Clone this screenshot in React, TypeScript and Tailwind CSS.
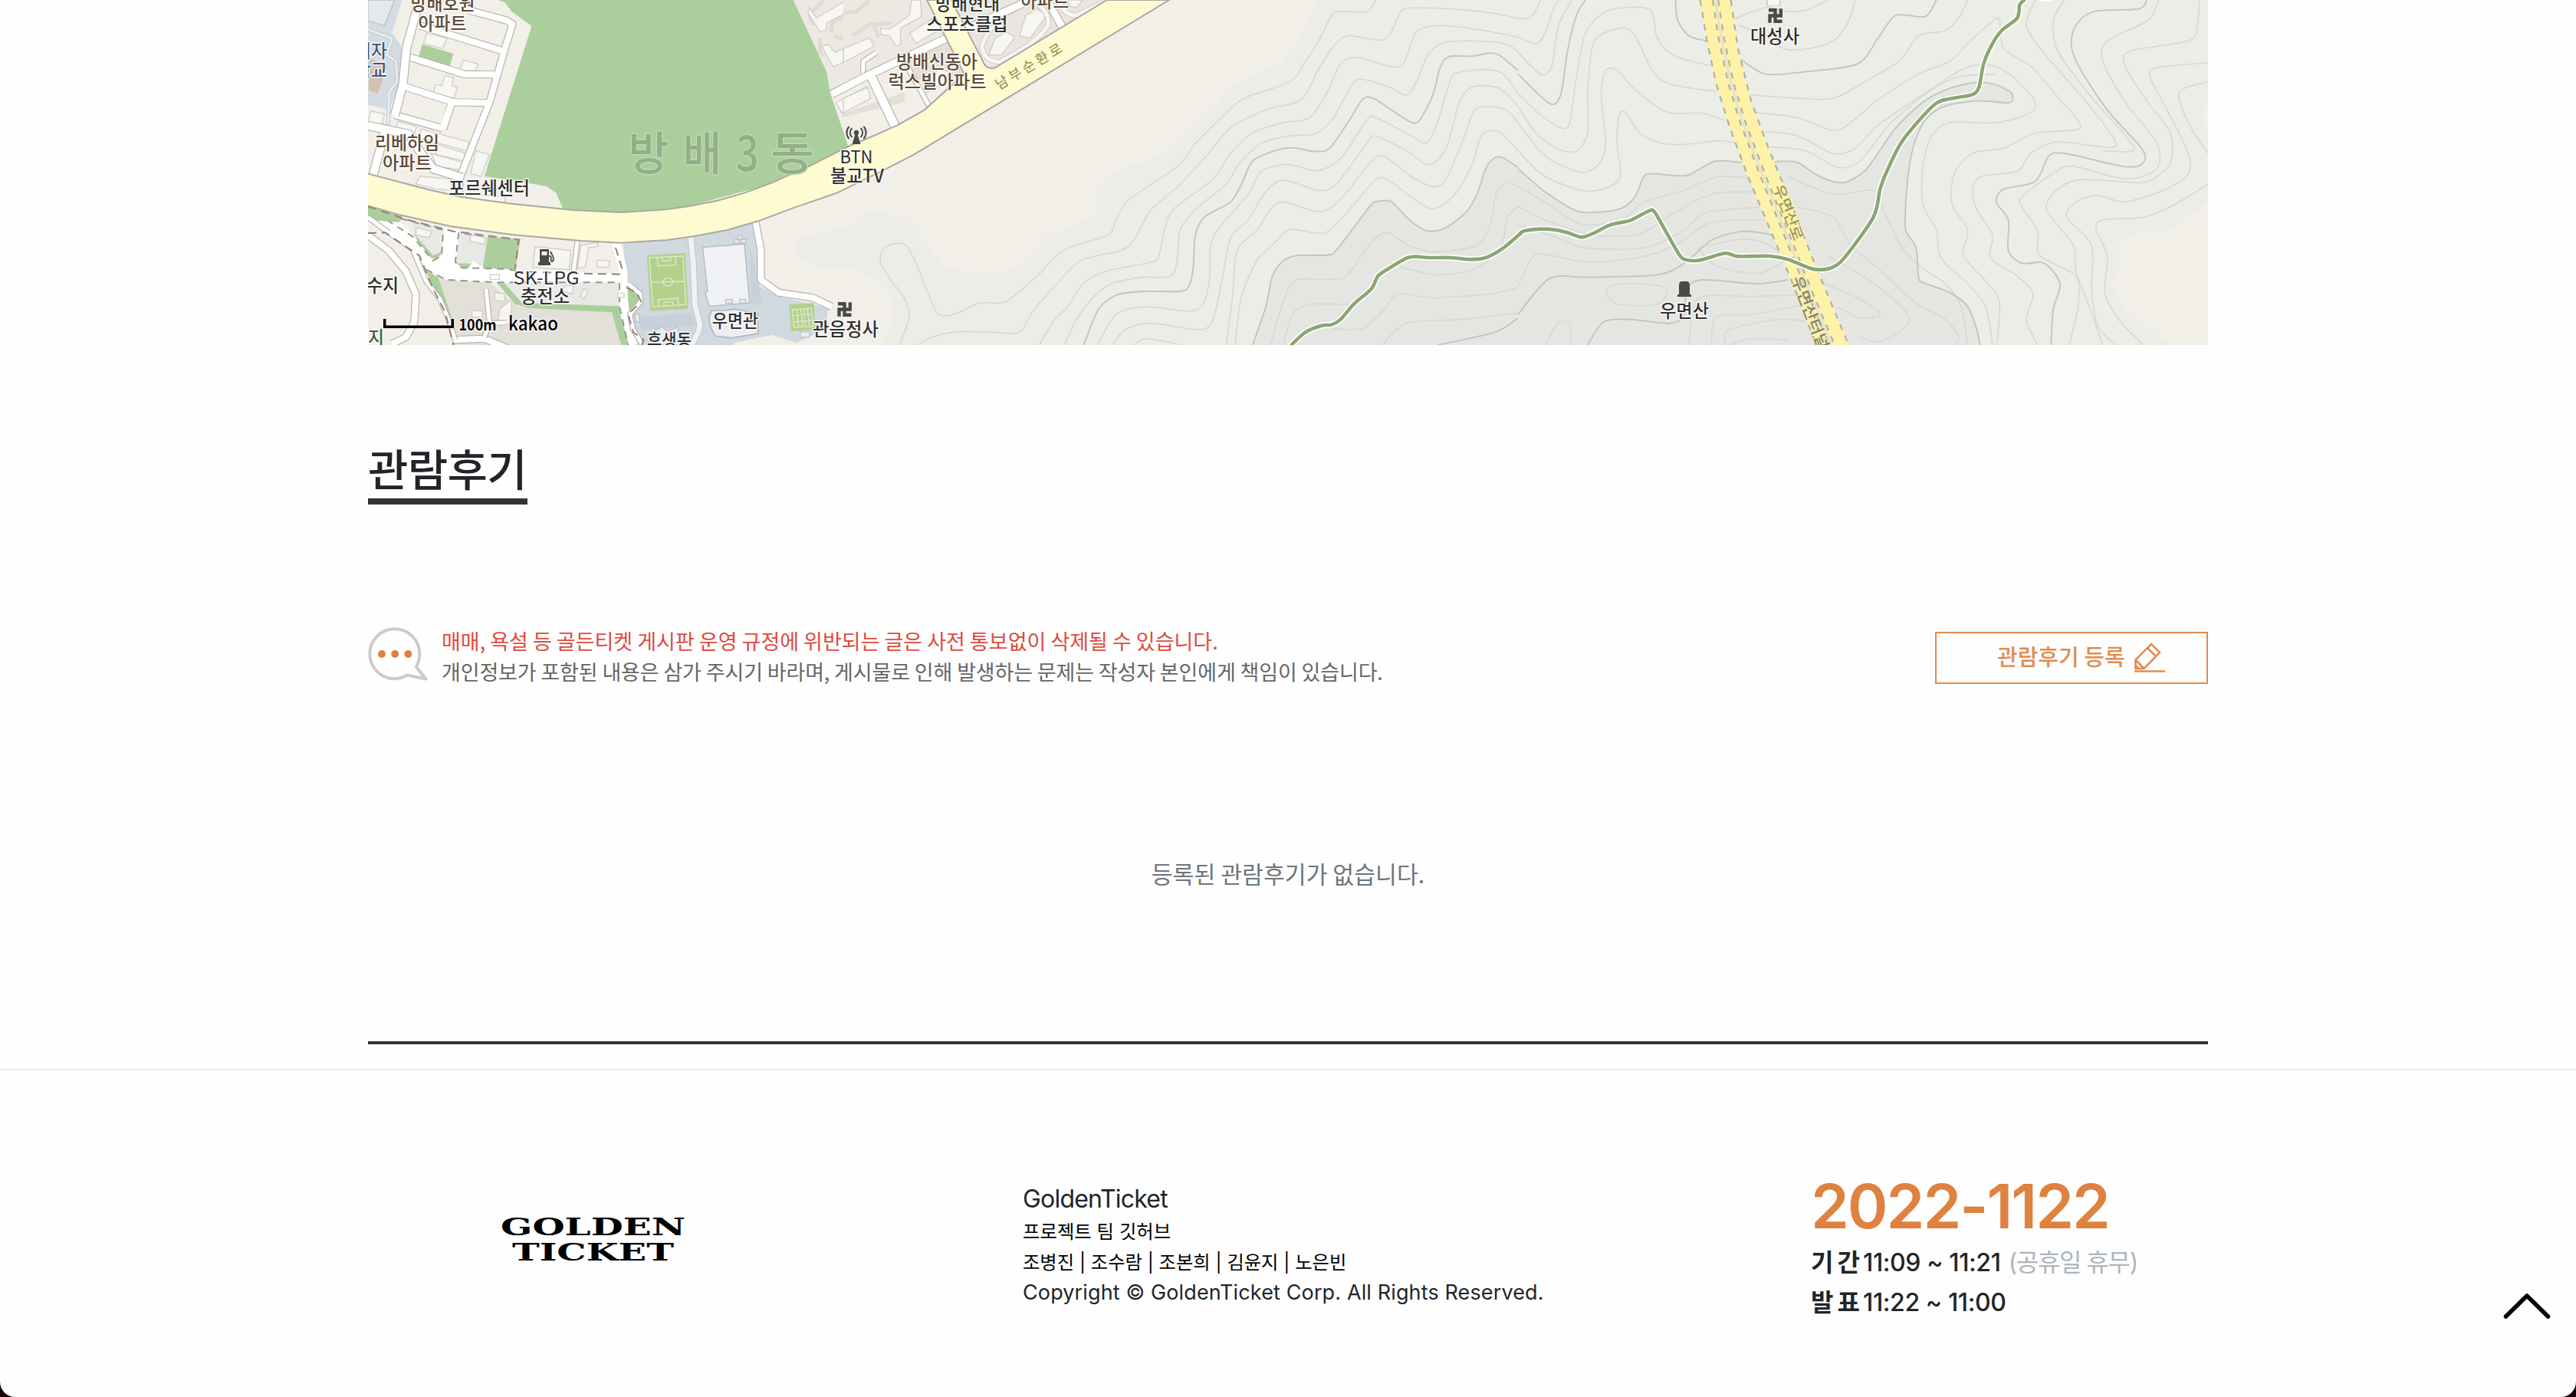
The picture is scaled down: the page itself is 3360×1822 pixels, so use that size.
import React from "react";

const KR = '"Noto Sans CJK KR", "Noto Sans", sans-serif';

/** Smooth curve (Catmull-Rom) through "x,y x,y ..." points. */
function curve(src: string): string {
  const p = src.trim().split(/\s+/).map((s) => s.split(",").map(Number));
  let d = `M${p[0][0]},${p[0][1]}`;
  for (let i = 0; i < p.length - 1; i++) {
    const a = p[Math.max(0, i - 1)];
    const b = p[i];
    const c = p[i + 1];
    const e = p[Math.min(p.length - 1, i + 2)];
    d += `C${b[0] + (c[0] - a[0]) / 7},${b[1] + (c[1] - a[1]) / 7} ${c[0] - (e[0] - b[0]) / 7},${c[1] - (e[1] - b[1]) / 7} ${c[0]},${c[1]}`;
  }
  return d;
}

const WEST = "scale(.446429 .333333)";
const MIDDLE = "translate(620) scale(.57398 .333333)";
const EAST = "translate(1500) scale(.586735 .333333)";

function Curves({ lines, color, width }: { lines: string[]; color: string; width: number }) {
  return (
    <>
      {lines.map((l) => (
        <path key={l} d={curve(l)} fill="none" stroke={color} strokeWidth={width} vectorEffect="non-scaling-stroke" />
      ))}
    </>
  );
}

function Lines({ lines, color, width, dash }: { lines: string[]; color: string; width: number; dash?: string }) {
  return (
    <>
      {lines.map((l) => (
        <polyline
          key={l}
          points={l}
          fill="none"
          stroke={color}
          strokeWidth={width}
          strokeDasharray={dash}
          strokeLinejoin="round"
          vectorEffect="non-scaling-stroke"
        />
      ))}
    </>
  );
}

function Streets({ lines, width }: { lines: string[]; width: number }) {
  return (
    <>
      <Lines lines={lines} color="#b5b3b0" width={width + 2.4} />
      <Lines lines={lines} color="#ffffff" width={width} />
    </>
  );
}

function Shapes({ items, fill, stroke }: { items: string[]; fill: string; stroke?: string }) {
  return (
    <>
      {items.map((s) => (
        <polygon key={s} points={s} fill={fill} stroke={stroke} strokeWidth={1.4} vectorEffect="non-scaling-stroke" />
      ))}
    </>
  );
}

const middleContours = [
  "1210,0 1190,45 1130,45 1110,60 1080,160 1050,240 1015,320 910,385 860,460 800,560 760,650 650,780 620,860 600,920 500,980 440,1080 370,1180 310,1185 260,1225 225,1235 205,1200 170,1050 145,965 120,952 90,975 85,1030 110,1100 140,1170 150,1240 128,1350",
  "1533,72 1470,50 1380,35 1280,32 1260,70 1230,155 1150,140 1120,170 1080,270 1040,390 960,430 880,500 830,600 760,730 700,820 660,940 630,980 540,1020 480,1120 430,1220 400,1300 340,1300 260,1298 200,1320 170,1350",
  "1533,145 1440,115 1350,100 1300,130 1265,260 1170,225 1130,250 1100,360 1060,460 1000,480 930,520 880,600 840,700 750,820 730,900 715,1010 690,1030 600,1060 545,1110 510,1200 480,1250 445,1350",
  "1533,205 1510,175 1460,162 1370,165 1330,210 1305,310 1280,372 1240,340 1170,310 1140,380 1110,470 1070,525 1020,530 950,560 900,640 870,720 800,820 765,900 760,1000 745,1080 680,1085 610,1110 570,1160 530,1250 502,1350",
  "1533,365 1500,290 1460,272 1400,283 1380,310 1350,480 1325,560 1290,530 1210,460 1190,470 1130,620 1075,668 1010,643 950,670 920,760 855,890 835,960 830,1120 800,1215 690,1200 620,1230 578,1350",
  "1533,415 1490,345 1430,340 1400,400 1370,580 1330,645 1280,590 1210,533 1190,560 1120,720 1080,745 1000,705 960,750 920,860 880,930 860,1100 840,1250 810,1290 700,1265 640,1290 612,1350",
  "1533,480 1510,435 1480,418 1435,430 1410,540 1370,700 1340,730 1290,690 1230,612 1200,630 1130,780 1080,828 1000,790 970,820 940,900 895,980 885,1150 870,1350",
  "1533,590 1490,515 1450,530 1430,640 1390,760 1340,817 1290,770 1230,698 1200,720 1130,860 1090,913 1015,898 980,950 940,1020 905,1160 890,1350",
  "1533,730 1510,712 1485,750 1470,880 1440,960 1350,985 1290,965 1240,912 1215,925 1180,990 1135,1088 1030,1095 1000,1180 970,1350",
  "1533,808 1510,850 1495,960 1440,1050 1350,1075 1265,1045",
  "1190,1160 1150,1190 1060,1190 1020,1230 1000,1350",
  "1533,1125 1470,1150 1340,1165 1260,1150 1230,1210 1180,1285 1110,1285",
  "1533,1225 1400,1250 1280,1265 1225,1350",
  "660,1350 690,1325 770,1350",
];
const middleIndex = [
  "1533,275 1490,215 1465,208 1430,220 1375,222 1355,270 1340,370 1310,470 1290,478 1245,430 1205,385 1180,388 1150,470 1105,580 1070,592 1020,578 980,590 930,630 905,720 880,790 820,850 800,920 795,1050 785,1120 765,1140 680,1140 620,1155 580,1210 546,1350",
  "1533,655 1500,618 1480,618 1460,660 1440,760 1415,830 1370,890 1335,905 1310,890 1280,850 1245,788 1215,788 1200,800 1160,890 1120,980 1100,998 1030,1000 1000,1020 975,1080 960,1200 930,1350",
  "1533,1245 1480,1300 1350,1350",
];
const eastContours = [
  "0,72 30,66 50,0",
  "0,145 40,172 60,130 80,30 92,0",
  "0,205 50,290 75,260 90,100 120,0",
  "0,365 50,450 95,500 115,480 130,300 150,130 190,50 240,30 295,40 310,150 350,220 430,258",
  "0,415 40,520 90,585 130,590 155,520 155,350 170,160 230,110 260,140 300,280 340,330 440,358",
  "0,480 60,610 140,675 180,640 195,560 185,370 195,275 220,275 260,350 330,438 410,443 458,470",
  "0,590 60,690 150,747 210,725 228,680 220,560 225,450 240,440 270,520 320,560 370,565 450,550 480,560",
  "0,730 60,790 140,877 230,860 280,790 360,750 400,720 450,690 530,700",
  "0,808 60,860 170,920 270,915 340,840 430,760 540,750",
  "0,880 80,925 150,970 280,970 370,900 420,830 550,810",
  "0,1120 30,1010 60,995 150,1025 260,1010 350,960 430,870 560,860",
  "195,1150 210,1115 280,1110 330,1130 320,1180 290,1195 220,1190 195,1150",
  "400,970 500,935 560,960 590,1020 530,1070 440,1040 400,970",
  "512,370 600,382 700,385 780,310 850,235 890,140 950,120 980,70 1000,0",
  "524,440 620,460 700,510 740,480 800,390 890,290 960,240 1000,170 1050,90 1070,75 1080,190 1140,260 1200,380 1250,500 1150,520 1080,580 1010,600 970,680 965,800 1000,900 990,1000 1040,1100 1070,1180 1065,1350",
  "550,515 620,530 700,600 750,580 800,490 900,370 990,270 1050,255 1100,300 1150,400 1130,450 1060,480 960,480 920,530 900,650 900,800 930,900 940,1010 1000,1110 1040,1200 1055,1350",
  "562,575 640,590 710,655 760,630 830,480 920,350 980,300 1060,290",
  "1150,0 1130,100 1170,210 1240,350 1300,480 1325,575 1200,555 1140,600 1110,670 1030,690 1010,740 1020,820 1055,920 1050,1010 1110,1080 1145,1150 1130,1250 1155,1350",
  "1215,0 1190,80 1200,200 1270,370 1350,530 1368,590 1300,590",
  "1425,0 1400,80 1310,160 1300,240 1350,400 1420,560 1420,660 1350,700 1230,650 1180,690 1120,770 1120,810 1155,900 1160,1000 1240,1080 1245,1200 1225,1350",
  "1515,0 1510,100 1490,160 1360,200 1350,260 1400,400 1450,520 1450,640 1400,710 1350,712 1250,703 1200,740 1175,820 1235,960 1240,1060 1270,1200 1300,1350",
  "1534,245 1420,265 1405,300 1440,420 1490,600 1490,680 1440,740 1350,790 1290,765 1240,790 1220,850 1275,960 1275,1130 1290,1280 1330,1350",
  "1534,320 1470,360 1490,480 1534,600",
  "1534,720 1460,800 1390,850 1300,860 1285,900 1310,1000 1305,1150 1340,1260 1390,1350",
  "600,690 700,760 790,745 815,830 850,960 900,1050 950,1110 985,1200 1000,1350",
  "620,810 700,850 740,960 800,1050 880,1180 950,1250 980,1320 970,1350",
  "690,1000 800,1120 870,1250 810,1335 760,1320",
  "680,1110 760,1170 805,1230 760,1245 710,1200",
  "380,1350 400,1170 520,1160 620,1155",
  "430,1350 440,1240 520,1230 640,1190",
  "460,1350 470,1290 580,1250 650,1260",
  "470,1350 520,1325 600,1330",
  "60,1350 90,1262 115,1270 118,1350",
  "480,75 550,30 600,45 640,40 690,0",
  "490,100 540,130 600,195 690,170 730,100 750,0",
];
const eastIndex = [
  "0,290 70,405 95,370 110,200 130,60 150,0",
  "350,0 355,80 380,140 418,160",
  "490,225 550,290 640,280 755,250 800,150 840,60 905,65 930,0",
  "1398,0 1380,35 1280,45 1240,100 1230,180 1250,270 1310,430 1390,590 1385,645 1350,652 1290,630 1215,600 1180,610 1150,710 1080,740 1063,790 1090,860 1090,980 1120,1030 1170,1030 1205,1110 1190,1210 1185,1350",
  "0,1230 70,1090 160,1085 310,1075 370,1030 430,940 500,905 570,920",
  "155,1350 190,1260 250,1250 340,1265 370,1230 375,1130 410,1095 530,1110 600,1095",
];
const ridge =
  "0,660 60,750 130,825 180,830 230,815 260,770 280,690 300,680 370,688 400,665 440,630 495,635 540,640 575,632 620,635 660,680 700,710 730,712 770,670 800,600 840,500 900,400 960,345 1020,322 1060,330 1095,360 1100,385 1090,402 1020,395 950,415 910,460 885,540 870,650 862,800 862,900 885,970 890,1080 900,1105 960,1145 1000,1200 1020,1290 1027,1350";
const trailMiddle =
  "1018,1350 1050,1300 1085,1275 1110,1270 1130,1250 1160,1190 1200,1130 1215,1080 1240,1050 1280,1010 1300,1004 1330,1008 1380,1008 1425,1015 1460,1008 1500,970 1540,912";
const trailEast =
  "5,912 15,903 50,896 85,900 110,910 140,928 165,915 205,880 250,862 290,826 303,828 330,910 360,1000 375,1017 405,1018 460,991 490,1003 560,1002 600,1015 650,1050 675,1055 700,1045 725,1010 790,850 805,740 820,670 855,550 925,410 965,385 1010,370 1025,340 1035,250 1055,170 1075,120 1110,70 1115,20 1125,0";

type LabelProps = {
  x: number;
  y: number;
  w: number;
  text: string;
  size?: number;
  color?: string;
  halo?: string;
  weight?: number;
};

function Label({ x, y, w, text, size = 23.5, color = "#2f2f2f", halo = "#ffffff", weight = 500 }: LabelProps) {
  return (
    <text
      x={x - w / 2}
      y={y}
      textLength={w}
      lengthAdjust="spacingAndGlyphs"
      fontSize={size}
      fontWeight={weight}
      fill={color}
      stroke={halo}
      strokeWidth={3}
      strokeOpacity={0.75}
      strokeLinejoin="round"
      paintOrder="stroke"
    >
      {text}
    </text>
  );
}

const BROWN = "#5c4a38";

function Temple({ x, y }: { x: number; y: number }) {
  return (
    <g transform={`translate(${x} ${y})`} fill="none" stroke="#4a4a4a" strokeWidth={4.4}>
      <path d="M1 2.200H9.500V16.800H18.500M2.500 18.800V9.500H16.800V0.200" />
    </g>
  );
}

function MapView() {
  return (
    <svg
      className="block h-[450px] w-[2400px] shrink-0"
      viewBox="0 0 2400 450"
      fontFamily={KR}
      role="img"
      aria-label="오시는 길 지도"
    >
      <rect width="2400" height="450" fill="#f2efe9" />

      {/* Hills and contour lines */}
      <g transform={MIDDLE}>
        <path
          d="M1075,0 L1065,60 1045,130 1000,240 930,290 880,340 850,400 800,480 760,540 720,600 640,660 Q570,720 572,760 L572,830 Q560,870 500,895 L460,920 430,980 400,1040 Q360,1070 300,1063 Q240,1055 225,1030 L190,950 150,870 Q110,830 80,825 Q50,830 20,870 Q-10,900 -45,905 Q-130,930 -110,1000 Q-80,1045 -30,1045 L0,1045 60,1080 Q110,1140 115,1220 L90,1350 3102,1350 3102,0Z"
          fill="#ecede7"
        />
        <path
          d={
            curve(
              "930,1350 960,1200 975,1080 1000,1020 1030,1000 1100,998 1120,980 1160,890 1200,800 1215,788 1245,788 1280,850 1310,890 1335,905 1370,890 1415,830 1440,760 1460,660 1480,618 1500,618 1535,657",
            ) + "L1535,1350Z"
          }
          fill="#e5e6e1"
        />
        <Curves lines={middleContours} color="#d7d8d3" width={1.6} />
        <Curves lines={middleIndex} color="#c2c3be" width={1.8} />
      </g>
      <g transform={EAST}>
        <path d={curve(ridge) + "L0,1350Z"} fill="#e5e6e1" />
        <path
          d="M1534,790 L1460,890 Q1440,905 1380,910 Q1340,930 1340,950 L1342,1010 Q1335,1060 1325,1080 Q1315,1130 1350,1205 L1447,1350 1534,1350Z"
          fill="#f2efe9"
        />
        <path d="M1534,415 Q1505,460 1534,510Z" fill="#f2efe9" />
        <Curves lines={eastContours} color="#d7d8d3" width={1.6} />
        <Curves lines={[...eastIndex, ridge]} color="#c2c3be" width={1.8} />
      </g>

      {/* Tunnel road */}
      <g transform={EAST}>
        <path
          d="M403,0 L420,160 440,330 470,500 510,690 560,900 610,1110 662,1350 L737,1350 660,1030 600,760 560,590 520,400 490,190 474,0Z"
          fill="#fef2a8"
        />
        <Lines lines={["439,0 452,150 474,330 500,480 545,690 600,930 650,1150 698,1350"]} color="#dedfda" width={2.5} />
        <Lines
          lines={[
            "405,0 420,160 441,330 471,500 511,690 561,900 611,1110 663,1350",
            "473,0 489,190 519,400 559,590 599,760 659,1030 735,1350",
            "433,0 446,150 468,330 494,480 539,690 594,930 644,1150 692,1350",
            "445,0 458,150 480,330 506,480 551,690 606,930 656,1150 704,1350",
          ]}
          color="#b0afa2"
          width={2.2}
          dash="8 8"
        />
      </g>

      {/* Hiking trail */}
      <g strokeLinecap="round">
        <g transform={MIDDLE}>
          <Curves lines={[trailMiddle]} color="#ffffff" width={8} />
        </g>
        <g transform={EAST}>
          <Curves lines={[trailEast]} color="#ffffff" width={8} />
        </g>
        <g transform={MIDDLE}>
          <Curves lines={[trailMiddle]} color="#8ba673" width={4.6} />
        </g>
        <g transform={EAST}>
          <Curves lines={[trailEast]} color="#8ba673" width={4.6} />
          <ellipse cx="1173" cy="-8" rx="24" ry="13" fill="#ffffff" />
          <rect x="554" y="-4" width="28" height="26" fill="#f8f8f5" stroke="#cfcfca" strokeWidth="3" />
        </g>
      </g>

      {/* City blocks */}
      <g transform={WEST}>
        <Shapes items={["0,0 100,0 70,130 98,180 95,320 70,400 60,430 0,410"]} fill="#d3dbe3" />
        <Shapes items={["0,0 78,0 48,100 0,82"]} fill="#e5e9ec" stroke="#b9c0c7" />
        <Shapes items={["0,222 60,256 30,370 0,355"]} fill="#d5c1b2" stroke="#e8ddd5" />
        <Lines lines={["0,115 70,150 55,215 82,240 85,320 62,360 58,510"]} color="#c0c7ce" width={5} />
        <Lines lines={["0,115 70,150 55,215 82,240 85,320 62,360 58,510"]} color="#e9edf0" width={3} />
        <Shapes
          items={[
            "380,0 1243,0 1340,280 1352,370 1405,580 1180,720 870,830 570,830 568,812 550,755 522,730 445,710 340,690 478,102 420,45 400,10",
            "158,173 250,210 238,262 148,222",
          ]}
          fill="#abcf9c"
        />
        <Shapes items={["1243,0 1568,0 1568,230 1352,370 1340,280"]} fill="#ece9e2" />
        <Lines
          lines={["1300,100 1290,60 1330,0", "1320,150 1320,200 1330,220", "1355,130 1355,90 1420,40 1500,30", "1360,140 1420,165 1470,110 1480,0"]}
          color="#dfdcd4"
          width={5}
        />
        <Shapes
          items={[
            "1290,30 1310,70 1400,0 1430,0 1435,25 1340,90 1340,115 1322,125 1285,50",
            "1325,180 1345,175 1365,205 1470,145 1480,180 1360,262 1350,240",
            "1495,105 1530,120 1568,85 1568,180 1548,180 1535,145 1497,135",
            "1366,402 1456,340 1468,385 1385,442",
            "172,128 230,150 218,190 162,170",
            "278,235 322,250 312,285 270,272",
            "225,295 250,305 245,335 262,342 250,385 190,362 198,330 215,335",
            "8,435 48,445 40,490 0,480",
            "88,475 142,495 135,525 80,505",
            "155,505 295,555 290,590 150,540",
            "190,560 285,600 280,630 200,605",
            "185,600 275,635 270,665 200,650",
            "315,590 355,605 330,690 300,680",
            "152,690 240,700 250,745 200,740 140,720",
            "285,760 400,770 400,795 290,775",
          ]}
          fill="#f7f6f3"
          stroke="#d2cfca"
        />
        <Shapes items={["1568,400 1385,460 1385,445 1568,360"]} fill="#e3e0d8" />
        <Streets
          width={8}
          lines={[
            "295,40 405,80 422,95 400,190 355,400 270,690 262,790",
            "150,100 190,115 390,198",
            "125,225 280,290 370,292",
            "110,340 250,400 355,403",
            "245,400 220,505",
            "78,450 220,503",
          ]}
        />
        <Streets width={10} lines={["150,0 112,190 102,330 78,452", "0,492 120,525 155,600 190,660 275,695", "50,510 12,700"]} />
        <Lines lines={["150,100 190,115 390,198", "125,225 280,290 370,292", "110,340 250,400 355,403", "245,400 220,490"]} color="#ffffff" width={8} />
      </g>

      {/* Junction east of the park */}
      <g transform={MIDDLE}>
        <Shapes items={["0,0 200,0 235,140 60,290 0,340 0,200"]} fill="#ece9e2" />
        <Shapes items={["245,0 600,0 340,270 320,230"]} fill="#e9e6df" />
        <Shapes items={["130,250 235,150 275,290 190,340"]} fill="#e2dfd8" />
        <Lines lines={["0,50 30,45 60,0", "20,140 60,95 110,90", "70,100 80,145"]} color="#dfdcd4" width={5} />
        <Shapes
          items={[
            "85,110 105,115 150,60 155,0 175,0 178,65 130,110 130,175 120,180 105,140 85,135",
            "0,190 60,148 70,180 0,245",
            "150,130 215,60 225,110 165,170",
            "0,385 55,342 62,385 0,442",
            "345,150 370,125 390,145 360,215 330,215",
            "415,60 440,35 462,60 425,150 400,140",
            "510,0 545,0 530,30 515,25",
            "215,270 240,280 235,320 190,360",
          ]}
          fill="#f7f6f3"
          stroke="#d2cfca"
        />
        <path
          d="M405,20 Q330,90 315,180 Q318,240 355,242 Q440,170 465,100 Q470,50 440,15 M490,0 Q500,60 530,60 L590,10"
          fill="none"
          stroke="#cfccc6"
          strokeWidth={7}
          vectorEffect="non-scaling-stroke"
        />
        <path
          d="M405,20 Q330,90 315,180 Q318,240 355,242 Q440,170 465,100 Q470,50 440,15 M490,0 Q500,60 530,60 L590,10"
          fill="none"
          stroke="#f7f6f3"
          strokeWidth={5}
          vectorEffect="non-scaling-stroke"
        />
        <Streets width={5} lines={["145,260 200,430"]} />
        <Streets width={5} lines={["45,290 45,240 75,205"]} />
        <Streets width={9} lines={["-26,368 0,345 50,300 240,145", "270,120 400,20 420,0", "470,20 505,130"]} />
        <Streets width={11} lines={["58,280 122,510"]} />
        <Lines lines={["0,345 50,300 240,145"]} color="#ffffff" width={9} />
      </g>

      {/* South-west blocks */}
      <g transform={WEST}>
        <Shapes items={["205,1090 350,1100 440,1200 710,1220 745,1350 250,1350"]} fill="#e3dfd9" />
        <Shapes items={["380,1100 740,1105 735,1200 450,1190", "130,870 220,890 215,1000 190,1000 130,920", "260,900 350,930 340,1040 255,1030"]} fill="#e8e9e5" />
        <Shapes
          items={[
            "0,805 100,850 90,872 0,860",
            "350,925 445,938 430,1055 335,1050",
            "375,1105 400,1110 450,1185 735,1198 770,1350 740,1350 712,1222 470,1205 430,1190",
            "135,915 190,1000 215,985 205,1010 185,1010 150,960",
            "170,1060 205,1085 245,1245 215,1195",
            "260,1030 330,1032 320,1052 262,1048",
            "755,1135 790,1130 800,1175 765,1225",
          ]}
          fill="#abcf9c"
        />
        <Shapes
          items={[
            "745,955 950,925 1130,870 1145,1120 1200,1160 1345,1205 1335,1290 1250,1342 1180,1310 1070,1340 1070,1350 780,1350 765,1230 800,1170 755,1100",
          ]}
          fill="#d0d8e0"
        />
        <Shapes items={["790,1240 950,1225 955,1275 800,1290", "1115,960 1140,1100 1150,1200 1120,1180"]} fill="#c8d1da" />
        <Shapes items={["815,998 927,990 936,1208 825,1217", "1230,1192 1303,1185 1307,1290 1237,1296"]} fill="#b4d18c" />
        <g fill="none" stroke="#dcead0" strokeWidth={1.4}>
          <path
            vectorEffect="non-scaling-stroke"
            d="M822,1008 L920,1002 929,1192 832,1200Z M827,1105 L925,1101 M845,1007 L847,1040 900,1037 898,1004 M860,1006 L861,1022 885,1020 884,1005 M850,1199 L848,1172 905,1168 907,1194 M866,1198 L865,1183 890,1181 891,1195"
          />
          <ellipse vectorEffect="non-scaling-stroke" cx="876" cy="1103" rx="14" ry="16" />
          <path vectorEffect="non-scaling-stroke" d="M1240,1212 L1265,1209 1270,1278 1245,1281Z M1273,1208 L1295,1206 1301,1276 1277,1279Z M1240,1235 L1298,1229 M1243,1260 L1300,1253 M1253,1210 L1258,1280 M1284,1207 L1290,1278" />
        </g>
        <Shapes items={["978,968 1100,955 1115,1185 997,1198 985,1145 992,1140"]} fill="#eff1f4" stroke="#b4bac2" />
        <path
          d="M1005,1215 L1040,1215 1070,1210 1115,1220 1138,1225 1140,1305 1060,1322 1015,1315 Q985,1250 1005,1215Z"
          fill="#eceef1"
          stroke="#b0b5bc"
          strokeWidth={1.6}
          vectorEffect="non-scaling-stroke"
        />
        <Shapes
          items={["1070,938 1085,938 1085,952 1070,952", "1080,922 1092,922 1092,936 1080,936", "1090,936 1105,936 1105,950 1090,950", "1045,1172 1065,1172 1065,1186 1045,1186", "1087,1172 1103,1172 1103,1186 1087,1186", "780,1230 792,1228 794,1258 782,1260", "840,1290 860,1280 875,1295 905,1280 915,1350 840,1350", "1263,1298 1290,1298 1290,1320 1263,1320"]}
          fill="#e8ebef"
          stroke="#bcc2c9"
        />
        <Lines lines={["943,928 950,1020 955,1190 970,1270 965,1300 945,1350"]} color="#bfc5cb" width={9} />
        <Lines lines={["943,928 950,1020 955,1190 970,1270 965,1300 945,1350"]} color="#eff1f3" width={7} />
        <Shapes
          items={[
            "488,965 592,980 588,1055 482,1045",
            "622,960 672,948 670,965 645,968 635,1045 612,1050",
            "670,1018 706,1020 704,1046 668,1044",
            "300,918 345,930 340,955 298,945",
            "140,890 185,905 180,930 140,920",
            "370,1145 400,1150 398,1180 370,1175",
            "385,1210 420,1170 418,1270 380,1260",
            "305,1215 335,1215 332,1270 325,1240 303,1240",
            "630,1130 643,1138 632,1168 620,1160",
            "575,1120 600,1115 598,1150 568,1140",
          ]}
          fill="#f6f5f2"
          stroke="#d0cdc8"
        />
        <Shapes
          items={[
            "10,862 95,870 135,925 190,1020 215,1005 225,890 270,900 255,1025 275,1048 400,1052 735,1072 735,1105 380,1105 230,1095 170,1055 150,1000 60,930",
          ]}
          fill="#ffffff"
        />
        <Lines lines={["300,1035 330,1060"]} color="#ffffff" width={12} />
        <Streets width={8} lines={["0,920 60,980 110,1060 140,1150 135,1260 110,1320 70,1345", "250,1330 340,1325 420,1370", "1132,868 1148,980 1148,1095 1200,1145 1300,1165 1355,1200"]} />
        <Streets width={5} lines={["345,1130 350,1200 355,1265 340,1320", "355,1265 405,1262", "612,945 600,1065", "0,850 70,920 130,975 170,1100 210,1170 235,1250 255,1330"]} />
        <Shapes items={["60,905 110,890 190,1020 215,1060 175,1055 120,960"]} fill="#ffffff" />
        <Lines lines={["725,950 745,1060 748,1220 775,1350"]} color="#ffffff" width={11} />
        <Streets width={5} lines={["760,1110 795,1150 797,1180 765,1230 775,1290 800,1345"]} />
        <Lines
          lines={[
            "0,808 120,862 250,905 440,938 430,1055",
            "0,912 50,910 150,1000 190,1130 225,1220 250,1350",
            "430,1062 610,1070 735,1073 742,1050 725,975 712,952",
            "755,1125 785,1145 798,1180 760,1230 775,1300 805,1330 800,1350",
          ]}
          color="#9a7d72"
          width={2}
          dash="11 7"
        />
        <Lines
          lines={["95,855 220,900 215,1000 190,1020 130,925 60,865", "445,938 265,912 255,1025 275,1048 400,1052 430,1058", "170,1055 230,1095 380,1105 735,1105 735,1200 760,1350"]}
          color="#969694"
          width={2}
          dash="9 7"
        />
        <Shapes items={["357,1074 384,1074 384,1093 357,1093", "730,1148 748,1148 748,1163 730,1163"]} fill="#ffffff" stroke="#d2cfca" />
      </g>

      {/* Main road */}
      <g transform={WEST}>
        <path
          d="M-10,676 L100,715 180,743 270,770 420,797 600,822 740,831 870,820 940,806 1020,785 1100,755 1180,715 1290,650 1400,575 1480,530 1550,488 1626,430 1742,290 L1633,0 1704,0 1795,235 Q1805,275 1832,265 L2159,0 2341,0 1595,605 1500,670 1370,755 1240,815 1140,865 1050,900 950,925 870,940 800,945 740,950 620,942 420,918 240,885 90,840 -10,801Z"
          fill="#fffbd1"
          stroke="#a9a8a2"
          strokeWidth={2}
          vectorEffect="non-scaling-stroke"
        />
      </g>

      {/* Place names */}
      <Label x={97.500} y={13} w={84} text="방배호원" color={BROWN} />
      <Label x={97} y={39} w={63} text="아파트" color={BROWN} />
      <Label x={4} y={75} w={42} text="여자" color="#3d5875" />
      <Label x={4} y={100} w={42} text="학교" color="#3d5875" />
      <Label x={51} y={194.500} w={84} text="리베하임" color={BROWN} />
      <Label x={51} y={220.500} w={64} text="아파트" color={BROWN} />
      <Label x={158} y={254} w={106} text="포르쉐센터" />
      <g transform="translate(222 325)" fill="#4a4a4a">
        <path fillRule="evenodd" d="M2 0h12v17h2v4H0v-4h2zM4.500 3v5h7V3z" />
        <path d="M14 9c5-1 1 7 4 7s2-6 0-9l-2-4" fill="none" stroke="#4a4a4a" strokeWidth={1.800} />
      </g>
      <Label x={232.500} y={371} w={86} text="SK-LPG" weight={400} />
      <Label x={231} y={395} w={64} text="충전소" />
      <Label x={479} y={427} w={60} text="우면관" />
      <Label x={393} y={453} w={58} text="후생동" />
      <Temple x={612} y={394} />
      <Label x={623} y={438} w={86} text="관음정사" />
      <g transform="translate(637 165)" fill="none" stroke="#4a4a4a" strokeWidth={2}>
        <circle cx="0" cy="8" r="3.200" fill="#4a4a4a" stroke="none" />
        <path d="M-1.500 10h3l4 13h-11z" fill="#4a4a4a" stroke="none" />
        <path d="M-5.500 14a8 8 0 0 1 0-12M5.500 14a8 8 0 0 0 0-12M-9.500 16a12 12 0 0 1 0-16M9.500 16a12 12 0 0 0 0-16" />
      </g>
      <Label x={637} y={212.500} w={43} text="BTN" weight={400} />
      <Label x={638} y={238} w={70} text="불교TV" />
      <Label x={366} y={222} w={53} size={60} text="방" color="#93af88" halo="#c3dcb8" />
      <Label x={436} y={222} w={50} size={60} text="배" color="#93af88" halo="#c3dcb8" />
      <Label x={495} y={223} w={30} size={64} text="3" color="#93af88" halo="#c3dcb8" />
      <Label x={553.500} y={222} w={56} size={60} text="동" color="#93af88" halo="#c3dcb8" />
      <Label x={19} y={380.500} w={42} text="수지" />
      <Label x={0} y={449} w={42} text="수지" color="#3e6149" />
      <Label x={782} y={13} w={84} text="방배현대" />
      <Label x={781.500} y={39.500} w={106} text="스포츠클럽" />
      <Label x={883} y={10} w={63} text="아파트" color={BROWN} />
      <Label x={742} y={88.500} w={106} text="방배신동아" color={BROWN} />
      <Label x={742.500} y={114.500} w={128} text="럭스빌아파트" color={BROWN} />
      <g transform="translate(862 87) rotate(-31)">
        <Label x={0} y={6} w={98} size={18} text="남 부 순 환 로" color="#a19858" halo="#fffbd1" weight={500} />
      </g>
      <Temple x={1826} y={11} />
      <Label x={1835} y={56} w={64} text="대성사" />
      <path d="M1710 371q1-4 3-4h8q2 0 3 4v13h2v3h-18v-3h2z" fill="#4a4a4a" />
      <Label x={1717} y={413.500} w={64} text="우면산" />
      <g transform="translate(1853 277) rotate(69)">
        <Label x={0} y={7} w={76} size={19} text="우면산로" color="#9a9560" halo="#fef2a8" />
      </g>
      <g transform="translate(1863 361) rotate(69)">
        <Label x={50} y={7} w={100} size={20} text="우면산터널" color="#83826a" halo="#f3ecb8" />
      </g>

      {/* Scale bar */}
      <path d="M21.700 416v10.300h88.500V416" fill="none" stroke="#000000" strokeWidth={3.500} />
      <Label x={143} y={431} w={49} size={20} weight={700} color="#000000" text="100m" />
      <Label x={215.500} y={431} w={65} size={25} weight={500} color="#000000" text="kakao" />
    </svg>
  );
}

function ChatIcon() {
  return (
    <svg className="h-[70px] w-[78px] shrink-0" viewBox="0 0 78 70" fill="none">
      <path
        d="M63 52 L75.500 67.500 L51 62.500 Q43 67 35 67.300 A32.500 32.500 0 1 1 67.300 35 Q67.200 44 63 52Z"
        stroke="#cbcbcb"
        strokeWidth={4}
        strokeLinejoin="round"
      />
      <circle cx="18" cy="35" r="5" fill="#df8040" />
      <circle cx="35.200" cy="35" r="5" fill="#df8040" />
      <circle cx="52.400" cy="35" r="5" fill="#df8040" />
    </svg>
  );
}

function PencilIcon() {
  return (
    <svg className="h-[40px] w-[40px]" viewBox="0 0 40 40" fill="none" stroke="#e18c50" strokeWidth={2.6}>
      <path d="M1.500 34V22.500L22 2 33 13 12.500 34ZM1.500 22.500L12.500 34M17 7l11 11M1.500 30l4 4" />
      <path d="M0 37.500h40" />
    </svg>
  );
}

export default function App() {
  return (
    <div className="flex h-[1822px] w-[3360px] flex-col overflow-hidden bg-[#1d0008] font-['Inter','Noto_Sans_CJK_KR',sans-serif] text-[#212529]">
      <div className="relative flex h-full flex-col rounded-b-[20px] bg-[#fefefe]">
        <main className="mx-auto flex h-[1394px] w-[2400px] flex-col">
          <MapView />

          <h2 className="mt-[118px] flex h-[90px] w-[208px] items-center whitespace-nowrap border-b-8 border-[#333333] font-['Noto_Sans_CJK_KR',sans-serif] text-[57px] font-medium leading-[82px] tracking-[-0.7px]">
            관람후기
          </h2>

          <div className="mt-[160px] flex h-[76px] items-start">
            <ChatIcon />
            <div className="-mt-[2px] ml-[18px] flex flex-col whitespace-nowrap font-['Noto_Sans_CJK_KR',sans-serif] text-[27px] leading-[40px]">
              <p className="text-[#dd4b3e]">
                매매, 욕설 등 골든티켓 게시판 운영 규정에 위반되는 글은 사전 통보없이 삭제될 수 있습니다.
              </p>
              <p className="tracking-[-0.14px] text-[#666666]">
                개인정보가 포함된 내용은 삼가 주시기 바라며, 게시물로 인해 발생하는 문제는 작성자 본인에게 책임이 있습니다.
              </p>
            </div>
            <button className="ml-auto mt-[6px] flex h-[68px] w-[356px] items-center border-[2.5px] border-[#e08a4e] pl-[79px] font-['Noto_Sans_CJK_KR',sans-serif] text-[29px] font-medium text-[#e18c50]">
              <span className="-mt-1 w-[179px] whitespace-nowrap text-left">관람후기 등록</span>
              <PencilIcon />
            </button>
          </div>

          <p className="mt-[220px] text-center font-['Noto_Sans_CJK_KR',sans-serif] text-[30.3px] leading-[50px] text-[#6c757d]">
            등록된 관람후기가 없습니다.
          </p>

          <hr className="mb-[32px] mt-auto h-1 border-0 bg-[#333333]" />
        </main>

        <footer className="flex h-[426px] border-t-2 border-[#ebebeb]">
          <div className="ml-[652px] mt-[188px] w-[682px]">
            <svg
              className="h-[64px] w-[244px]"
              viewBox="0 0 244 64"
              fontFamily='"DejaVu Serif", serif'
              fontWeight={700}
              fontSize={32}
              fill="#000000"
            >
              <text x="1" y="27" textLength="241" lengthAdjust="spacingAndGlyphs">
                GOLDEN
              </text>
              <text x="16" y="60" textLength="211" lengthAdjust="spacingAndGlyphs">
                TICKET
              </text>
            </svg>
          </div>
          <div className="mt-[146px] flex w-[1028px] flex-col whitespace-nowrap">
            <span className="text-[32px] leading-[44px] tracking-[-0.8px]">GoldenTicket</span>
            <span className="text-[24.4px] leading-[40px] text-black">프로젝트 팀 깃허브</span>
            <span className="text-[24.3px] leading-[40px] text-black">조병진 | 조수람 | 조본희 | 김윤지 | 노은빈</span>
            <span className="text-[27px] leading-[40px] tracking-[0.13px]">
              Copyright © GoldenTicket Corp. All Rights Reserved.
            </span>
          </div>
          <div className="mt-[129px] flex flex-col whitespace-nowrap">
            <strong className="text-[80px] font-semibold leading-[96px] tracking-[-2px] text-[#df8240]">2022-1122</strong>
            <p className="flex text-[32px] leading-[52px]">
              <b className="w-[68px] tracking-[-1.2px]">기 간</b>
              <span className="font-medium tracking-[-0.4px]">11:09 ~ 11:21</span>
              <span className="ml-[10px] tracking-[-1.4px] text-[#adb5bd]">(공휴일 휴무)</span>
            </p>
            <p className="flex text-[32px] leading-[52px]">
              <b className="w-[68px] tracking-[-1.2px]">발 표</b>
              <span className="font-medium tracking-[-0.4px]">11:22 ~ 11:00</span>
            </p>
          </div>
        </footer>

        <button className="absolute bottom-[99px] right-[32px]" aria-label="맨 위로">
          <svg className="h-[40px] w-[64px]" viewBox="0 0 64 40" fill="none">
            <path d="M4.500 34 32 7 59.500 34" stroke="#000000" strokeWidth={5.5} strokeLinecap="round" strokeLinejoin="round" />
          </svg>
        </button>
      </div>
    </div>
  );
}
